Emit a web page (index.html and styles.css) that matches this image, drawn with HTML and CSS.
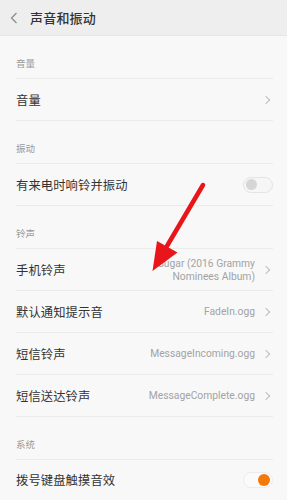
FILE: index.html
```html
<!DOCTYPE html>
<html lang="zh">
<head>
<meta charset="utf-8">
<link rel="stylesheet" href="styles.css">
</head>
<body>
<div class="page">
  <header class="topbar">
    <svg class="back" width="8" height="12" viewBox="0 0 8 12"><path d="M6.5 1 L1.5 6 L6.5 11" fill="none" stroke="#8a8a8a" stroke-width="1.2"/></svg>
    <span class="title">声音和振动</span>
  </header>
  <div class="list">
    <div class="section s1">音量</div>
    <div class="row"><span class="label">音量</span><span class="right"><span class="chev"></span></span></div>
    <div class="section">振动</div>
    <div class="row"><span class="label">有来电时响铃并振动</span><span class="switch off"><span class="knob"></span></span></div>
    <div class="section">铃声</div>
    <div class="row"><span class="label">手机铃声</span><span class="right"><span class="value">Sugar (2016 Grammy<br>Nominees Album)</span><span class="chev"></span></span></div>
    <div class="row"><span class="label">默认通知提示音</span><span class="right"><span class="value">FadeIn.ogg</span><span class="chev"></span></span></div>
    <div class="row"><span class="label">短信铃声</span><span class="right"><span class="value">MessageIncoming.ogg</span><span class="chev"></span></span></div>
    <div class="row"><span class="label">短信送达铃声</span><span class="right"><span class="value">MessageComplete.ogg</span><span class="chev"></span></span></div>
    <div class="section">系统</div>
    <div class="row"><span class="label">拨号键盘触摸音效</span><span class="switch on"><span class="knob"></span></span></div>
  </div>
  <svg class="arrow" width="287" height="500" viewBox="0 0 287 500">
    <line x1="203" y1="185" x2="167" y2="246" stroke="#e8161b" stroke-width="4.5" stroke-linecap="round"/>
    <polygon points="152.5,271 157,241 177.5,252.5" fill="#e8161b"/>
  </svg>
</div>
</body>
</html>
```
FILE: styles.css
```css
* { box-sizing: border-box; }
html, body { margin: 0; padding: 0; }
body {
  width: 287px;
  height: 500px;
  overflow: hidden;
  background: #f8f8f8;
  font-family: "Noto Sans CJK SC", "Noto Sans", sans-serif;
  color: #333;
}
.page { position: relative; width: 287px; height: 500px; overflow: hidden; }
.topbar {
  height: 36px;
  background: #eeeeee;
  display: flex;
  align-items: center;
  padding-left: 10px;
  border-bottom: 1px solid #e6e6e6;
}
.back { margin-right: 12px; margin-top: 1px; }
.title { font-size: 13px; font-weight: 500; color: #333; letter-spacing: 0.2px; }
.list { margin: 0 14px 0 16px; }
.section {
  height: 43px;
  display: flex;
  align-items: center;
  padding-top: 11px;
  font-size: 9.5px;
  color: #9a9a9a;
  border-bottom: 1px solid #ebebeb;
}
.section.s1 { height: 43px; }
.row {
  height: 42px;
  display: flex;
  align-items: center;
  justify-content: space-between;
  border-bottom: 1px solid #ebebeb;
}
.row:last-child { height: 41px; }
.label { font-size: 12.3px; color: #333; letter-spacing: 0.1px; }
.right { display: flex; align-items: center; }
.value {
  font-family: Roboto, "Noto Sans CJK SC", sans-serif;
  font-size: 10.3px;
  color: #a3a3a3;
  text-align: right;
  line-height: 13px;
  margin-right: 8px;
}
.chev {
  width: 6px;
  height: 6px;
  border-top: 1px solid #bdbdbd;
  border-right: 1px solid #bdbdbd;
  transform: rotate(45deg);
  margin-right: 4px;
}
.switch {
  width: 30px;
  height: 16px;
  border-radius: 8px;
  border: 1px solid #e4e4e4;
  background: #f6f6f6;
  display: flex;
  align-items: center;
  padding: 0 2px;
  margin-right: 0;
}
.switch .knob { width: 11px; height: 11px; border-radius: 50%; background: #d6d6d6; }
.switch.on { justify-content: flex-end; background: #fbfbfb; border-color: #ececec; }
.switch.on .knob { width: 12px; height: 12px; background: #f5780a; }
.arrow { position: absolute; left: 0; top: 0; pointer-events: none; }
```
